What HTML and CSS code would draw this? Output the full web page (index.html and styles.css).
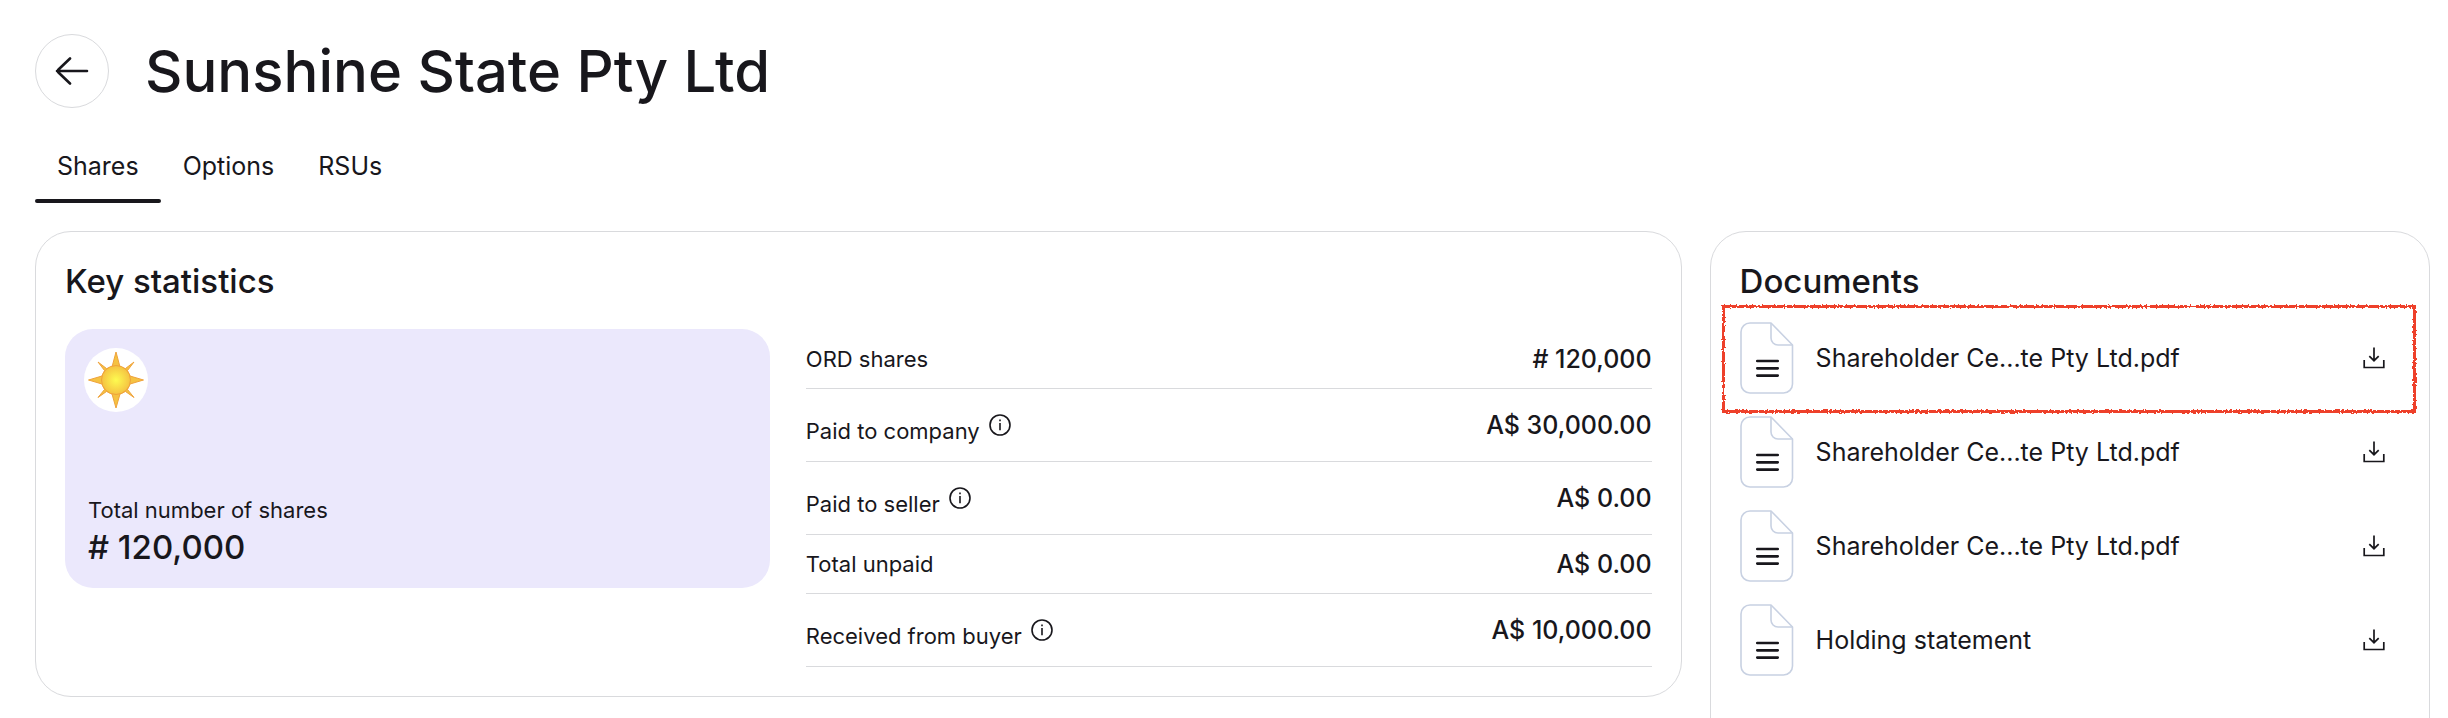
FILE: index.html
```html
<!DOCTYPE html>
<html lang="en">
<head>
    <meta charset="UTF-8">
    <meta name="viewport" content="width=device-width, initial-scale=1.0">
    <title>Sunshine State Pty Ltd</title>
    <link rel="stylesheet" href="styles.css">
</head>
<body>
    <!-- shared icons -->
    <svg class="sprite" aria-hidden="true">
        <symbol id="icon-info" viewBox="0 0 22 22">
            <circle cx="11" cy="11" r="10" fill="none" stroke="currentColor" stroke-width="1.6"/>
            <path d="M11 9v7.2M11 5.4v1.9" fill="none" stroke="currentColor" stroke-width="1.6"/>
        </symbol>
        <symbol id="icon-file" viewBox="0 0 54 72">
            <path d="M31 1H10a9 9 0 0 0-9 9v52a9 9 0 0 0 9 9h33.500a9 9 0 0 0 9-9V23z" fill="#fff" stroke="#c8d1e2" stroke-width="1.600" stroke-linejoin="round"/>
            <path d="M31 1v15a7 7 0 0 0 7 7h14.500" fill="none" stroke="#c8d1e2" stroke-width="1.600"/>
            <path d="M17.300 39h20.400M17.300 46.300h20.400M17.300 53.600h20.400" fill="none" stroke="#18171c" stroke-width="2.700" stroke-linecap="round"/>
        </symbol>
        <symbol id="icon-download" viewBox="0 0 22 22">
            <path d="M1.200 13v7.500h19.600V13M11 .500v13M6.300 9.200l4.700 4.500 4.700-4.500" fill="none" stroke="currentColor" stroke-width="1.700"/>
        </symbol>
        <filter id="rough" x="-2%" y="-10%" width="104%" height="120%">
            <feTurbulence type="fractalNoise" baseFrequency="0.5" numOctaves="2" seed="4"/>
            <feDisplacementMap in="SourceGraphic" scale="4" xChannelSelector="R" yChannelSelector="G"/>
        </filter>
    </svg>

    <header class="page-header">
        <button class="back" type="button" aria-label="Back">
            <svg width="34" height="28" viewBox="0 0 34 28" fill="none" stroke="currentColor" stroke-width="2.600" stroke-linecap="round" stroke-linejoin="round">
                <path d="M32 14H2M15 1.500L3.500 12.500Q2 14 3.500 15.500L15 26.500"/>
            </svg>
        </button>
        <h1>Sunshine State Pty Ltd</h1>
    </header>

    <nav class="tabs">
        <a class="tab active" href="#shares">Shares</a>
        <a class="tab" href="#options">Options</a>
        <a class="tab" href="#rsus">RSUs</a>
    </nav>

    <main class="content">
        <section class="card">
            <h2>Key statistics</h2>
            <div class="stats">
                <div class="total">
                    <div class="logo">
                        <svg width="56" height="58" viewBox="-28 -29 56 58">
                            <defs>
                                <radialGradient id="sun">
                                    <stop offset="0" stop-color="#fdfb50"/>
                                    <stop offset="1" stop-color="#f5c242"/>
                                </radialGradient>
                            </defs>
                            <path d="M0-28L4-13 9.500-11.500 18-18 11.500-9.500 14-4 27.500 0 14 4 11.500 9.500 18 17.500 9.500 11.500 4 14 0 28-4 14-9.500 11.500-18 17.500-11.500 9.500-14 4-27.500 0-14-4-11.500-9.500-18-18-9.500-11.500-4-13z" fill="#f5c242" stroke="#efa23b" stroke-width="1"/>
                            <circle r="14.500" fill="url(#sun)" stroke="#efa23b" stroke-width="1"/>
                        </svg>
                    </div>
                    <div class="total-text">
                        <p class="label">Total number of shares</p>
                        <p class="total-value"># 120,000</p>
                    </div>
                </div>
                <dl class="figures">
                    <div class="figure">
                        <dt>ORD shares</dt>
                        <dd># 120,000</dd>
                    </div>
                    <div class="figure with-info">
                        <dt>Paid to company <button class="info" type="button" aria-label="About paid to company"><svg width="22" height="22"><use href="#icon-info"/></svg></button></dt>
                        <dd>A$ 30,000.00</dd>
                    </div>
                    <div class="figure with-info">
                        <dt>Paid to seller <button class="info" type="button" aria-label="About paid to seller"><svg width="22" height="22"><use href="#icon-info"/></svg></button></dt>
                        <dd>A$ 0.00</dd>
                    </div>
                    <div class="figure">
                        <dt>Total unpaid</dt>
                        <dd>A$ 0.00</dd>
                    </div>
                    <div class="figure with-info">
                        <dt>Received from buyer <button class="info" type="button" aria-label="About received from buyer"><svg width="22" height="22"><use href="#icon-info"/></svg></button></dt>
                        <dd>A$ 10,000.00</dd>
                    </div>
                </dl>
            </div>
        </section>

        <section class="card documents">
            <h2>Documents</h2>
            <ul class="files">
                <li class="file highlighted">
                    <svg width="54" height="72"><use href="#icon-file"/></svg>
                    <span class="file-name">Shareholder Ce...te Pty Ltd.pdf</span>
                    <button class="download" type="button" aria-label="Download"><svg width="22" height="22"><use href="#icon-download"/></svg></button>
                </li>
                <li class="file">
                    <svg width="54" height="72"><use href="#icon-file"/></svg>
                    <span class="file-name">Shareholder Ce...te Pty Ltd.pdf</span>
                    <button class="download" type="button" aria-label="Download"><svg width="22" height="22"><use href="#icon-download"/></svg></button>
                </li>
                <li class="file">
                    <svg width="54" height="72"><use href="#icon-file"/></svg>
                    <span class="file-name">Shareholder Ce...te Pty Ltd.pdf</span>
                    <button class="download" type="button" aria-label="Download"><svg width="22" height="22"><use href="#icon-download"/></svg></button>
                </li>
                <li class="file">
                    <svg width="54" height="72"><use href="#icon-file"/></svg>
                    <span class="file-name">Holding statement</span>
                    <button class="download" type="button" aria-label="Download"><svg width="22" height="22"><use href="#icon-download"/></svg></button>
                </li>
            </ul>
        </section>
    </main>
</body>
</html>
```
FILE: styles.css
```css
* {
    box-sizing: border-box;
}

body {
    margin: 0;
    padding: 34px 18px 0 35px;
    height: 100vh;
    overflow: hidden;
    font-family: Inter, sans-serif;
    font-size: 25px;
    color: #18171c;
    background: #fff;
}

h1, h2, p, dl, dd, ul {
    margin: 0;
    padding: 0;
}

button {
    padding: 0;
    border: none;
    background: none;
    color: inherit;
    cursor: pointer;
}

svg {
    display: block;
    flex-shrink: 0;
}

.sprite {
    position: absolute;
    width: 0;
    height: 0;
}

.page-header {
    display: flex;
    align-items: center;
    gap: 36px;
}

.back {
    display: flex;
    align-items: center;
    justify-content: center;
    width: 74px;
    height: 74px;
    border: 1px solid #d9dadd;
    border-radius: 50%;
}

h1 {
    font-size: 58px;
    font-weight: 500;
    line-height: 72px;
}

.tabs {
    display: flex;
    margin-top: 34px;
}

.tab {
    padding-top: 8px;
    line-height: 32px;
    text-indent: 22px;
    padding-right: 22px;
    color: inherit;
    text-decoration: none;
}

.tab::after {
    content: "";
    display: block;
    height: 4px;
    margin-top: 17px;
    margin-right: -22px;
    border-radius: 2px;
}

.tab.active::after {
    background: #18171c;
}

.content {
    display: grid;
    grid-template-columns: minmax(0, 16fr) minmax(0, 7fr);
    align-items: start;
    gap: 28px;
    margin-top: 28px;
}

.card {
    padding: 29px;
    border: 1px solid #d9dadd;
    border-radius: 36px;
}

h2 {
    font-size: 33px;
    font-weight: 500;
    line-height: 40px;
}

.stats {
    display: grid;
    grid-template-columns: minmax(0, 5fr) minmax(0, 6fr);
    align-items: start;
    gap: 36px;
    margin-top: 28px;
}

.total {
    display: flex;
    flex-direction: column;
    justify-content: space-between;
    min-height: 259px;
    padding: 19px;
    border-radius: 28px;
    background: #ebe8fc;
}

.logo {
    display: flex;
    align-items: center;
    justify-content: center;
    width: 64px;
    height: 64px;
    border-radius: 50%;
    background: #fff;
}

.total-text {
    padding-left: 4px;
}

.label,
dt {
    font-size: 22px;
    line-height: 30px;
}

.total-value {
    font-size: 33px;
    font-weight: 500;
    line-height: 44px;
}

.figures {
    padding-top: 1px;
}

.figure {
    display: flex;
    align-items: center;
    justify-content: space-between;
    height: 59px;
    border-bottom: 1px solid #d9dadd;
}

.figure.with-info {
    height: 73px;
}

.with-info dt {
    display: flex;
    align-items: flex-end;
    gap: 9px;
    height: 42px;
}

.info {
    align-self: center;
}

dd {
    font-weight: 500;
    line-height: 32px;
}

.documents {
    padding-bottom: 80px;
}

.files {
    margin-top: 10px;
    list-style: none;
}

.file {
    position: relative;
    display: flex;
    align-items: center;
    gap: 22px;
    height: 94px;
}

.file-name {
    flex: 1;
    line-height: 32px;
}

.download {
    display: flex;
    align-items: center;
    justify-content: center;
    width: 52px;
    height: 52px;
}

/* hand-drawn outline around the marked file */
.highlighted::after {
    content: "";
    position: absolute;
    inset: -6px -16px -8px -18px;
    border: 3px solid #ee4129;
    filter: url(#rough);
    pointer-events: none;
}
```
